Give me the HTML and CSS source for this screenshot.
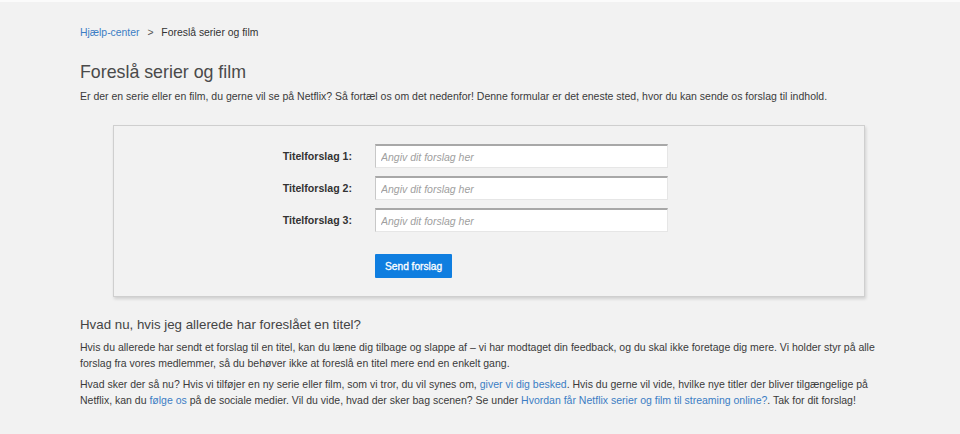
FILE: index.html
```html
<!DOCTYPE html>
<html lang="da">
<head>
<meta charset="utf-8">
<title>Foreslå serier og film</title>
<link rel="stylesheet" href="styles.css">
</head>
<body>
<div class="topline"></div>
<div class="page">
  <nav class="crumbs">
    <a href="#" class="link">Hjælp-center</a>
    <span class="sep">&gt;</span>
    <span class="current">Foreslå serier og film</span>
  </nav>
  <h1 class="title">Foreslå serier og film</h1>
  <p class="intro">Er der en serie eller en film, du gerne vil se på Netflix? Så fortæl os om det nedenfor! Denne formular er det eneste sted, hvor du kan sende os forslag til indhold.</p>

  <form class="box">
    <div class="grid">
      <label class="lbl" for="t1">Titelforslag 1:</label>
      <input class="field" id="t1" type="text" placeholder="Angiv dit forslag her">
      <label class="lbl" for="t2">Titelforslag 2:</label>
      <input class="field" id="t2" type="text" placeholder="Angiv dit forslag her">
      <label class="lbl" for="t3">Titelforslag 3:</label>
      <input class="field" id="t3" type="text" placeholder="Angiv dit forslag her">
      <span class="spacer"></span>
      <div class="actions"><button type="button" class="btn">Send forslag</button></div>
    </div>
  </form>

  <h2 class="sub">Hvad nu, hvis jeg allerede har foreslået en titel?</h2>
  <p class="text">Hvis du allerede har sendt et forslag til en titel, kan du læne dig tilbage og slappe af – vi har modtaget din feedback, og du skal ikke foretage dig mere. Vi holder styr på alle forslag fra vores medlemmer, så du behøver ikke at foreslå en titel mere end en enkelt gang.</p>
  <p class="text">Hvad sker der så nu? Hvis vi tilføjer en ny serie eller film, som vi tror, du vil synes om, <a href="#" class="link">giver vi dig besked</a>. Hvis du gerne vil vide, hvilke nye titler der bliver tilgængelige på Netflix, kan du <a href="#" class="link">følge os</a> på de sociale medier. Vil du vide, hvad der sker bag scenen? Se under <a href="#" class="link">Hvordan får Netflix serier og film til streaming online?</a>. Tak for dit forslag!</p>
</div>
</body>
</html>
```

FILE: styles.css
```css
html, body {
  margin: 0;
  padding: 0;
  background: #f2f2f2;
  font-family: "Liberation Sans", Arial, sans-serif;
  color: #3a3a3a;
}
.topline {
  height: 2px;
  background: #fbfbfb;
}
.page {
  width: 800px;
  padding: 0 0 0 80px;
}
.link {
  color: #3b7dc4;
  text-decoration: none;
}
.crumbs {
  padding-top: 24px;
  font-size: 10.4px;
  line-height: 13px;
  color: #333;
}
.sep {
  margin: 0 5px;
  color: #555;
}
.title {
  margin: 22px 0 0 0;
  font-size: 17.8px;
  font-weight: normal;
  line-height: 22px;
  color: #4a4a4a;
}
.intro {
  margin: 6px 0 0 0;
  font-size: 10.5px;
  line-height: 14px;
  color: #3a3a3a;
}
.box {
  margin: 22px 0 0 33px;
  width: 750px;
  border: 1px solid #cfcfcf;
  box-shadow: 1px 2px 3px rgba(0,0,0,0.14);
  padding: 18px 0 18px 0;
  background: #f2f2f2;
}
.grid {
  display: grid;
  grid-template-columns: 238px 293px;
  column-gap: 23px;
  row-gap: 8px;
  align-items: center;
}
.lbl {
  text-align: right;
  font-size: 10.6px;
  font-weight: bold;
  color: #333;
}
.field {
  box-sizing: border-box;
  height: 24px;
  width: 293px;
  margin: 0;
  border: 1px solid #e6e6e6;
  border-top: 2px solid #a8a8a8;
  border-left: 1px solid #c8c8c8;
  background: #fff;
  padding: 0 5px;
  font-family: "Liberation Sans", Arial, sans-serif;
  font-size: 10.5px;
  outline: none;
}
.field::placeholder {
  color: #a0a0a0;
  font-style: italic;
}
.actions {
  padding-top: 14px;
}
.btn {
  height: 24px;
  padding: 0 10px;
  border: none;
  border-radius: 1px;
  background: #0f7ee0;
  color: #fff;
  font-family: "Liberation Sans", Arial, sans-serif;
  font-size: 10.2px;
  font-weight: normal;
  -webkit-text-stroke: 0.3px #fff;
}
.sub {
  margin: 19px 0 0 0;
  font-size: 13.3px;
  font-weight: normal;
  line-height: 18px;
  color: #444;
}
.text {
  margin: 5px 0 0 0;
  font-size: 10.5px;
  line-height: 16px;
  color: #3a3a3a;
}
.text + .text {
  margin-top: 5px;
}
```
